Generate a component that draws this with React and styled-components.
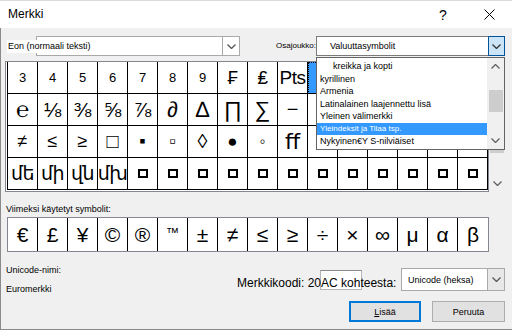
import React from 'react'
import styled, { createGlobalStyle } from 'styled-components'

const GlobalStyle = createGlobalStyle`
  html, body {
    margin: 0;
    padding: 0;
  }
  body {
    width: 512px;
    height: 330px;
    overflow: hidden;
    background: #f0f0f0;
    font-family: "Liberation Sans", Arial, sans-serif;
    color: #000;
  }
`

const SQ = 'sq'

// cells in columns 11-16 of the first three rows lie under the open subset list
const gridRows = [
  [['3', 13], ['4', 13], ['5', 13], ['6', 13], ['7', 13], ['8', 13], ['9', 13], ['₣', 19], ['₤', 19], ['Pts', 19], ['', 19, true], ['', 19], ['', 19], ['', 19], ['', 19], ['', 19]],
  [['℮', 22], ['⅛', 21], ['⅜', 21], ['⅝', 21], ['⅞', 21], ['∂', 22], ['∆', 22], ['∏', 22], ['∑', 22], ['−', 20], ['', 20], ['', 20], ['', 20], ['', 20], ['', 20], ['', 20]],
  [['≠', 18], ['≤', 18], ['≥', 18], ['□', 20], ['▪', 18], ['▫', 18], ['◊', 20], ['●', 17], ['◦', 17], ['ﬀ', 22], ['', 22], ['', 22], ['', 22], ['', 22], ['', 22], ['', 22]],
  [['մե', 19], ['մի', 19], ['վն', 19], ['մխ', 19], ...Array.from({ length: 12 }, () => [SQ, 0])],
]

const recent = [
  ['€'], ['£'], ['¥'], ['©'], ['®'], ['™', 13, true], ['±'], ['≠'],
  ['≤'], ['≥'], ['÷'], ['×'], ['∞'], ['μ'], ['α'], ['β'],
]

const subsets = [
  { label: 'kreikka ja kopti', indent: true },
  { label: 'kyrillinen' },
  { label: 'Armenia' },
  { label: 'Latinalainen laajennettu lisä' },
  { label: 'Yleinen välimerkki' },
  { label: 'Yleindeksit ja Tilaa tsp.', active: true },
  { label: 'Nykyinen€Y S-nilviäiset' },
]

const Chevron = ({ up, color = '#444', w = 9 }) => (
  <svg width={w} height="5" viewBox="0 0 9 5">
    <polyline
      points={up ? '0.5,4.5 4.5,0.5 8.5,4.5' : '0.5,0.5 4.5,4.5 8.5,0.5'}
      fill="none"
      stroke={color}
      strokeWidth="1.3"
    />
  </svg>
)

const App = () => {
  return (
    <>
      <GlobalStyle />
      <Window>
        <TitleBar>
          <Title>Merkki</Title>
          <CaptionButton>?</CaptionButton>
          <CaptionButton>
            <svg width="11" height="11" viewBox="0 0 11 11">
              <path d="M0.5 0.5 L10.5 10.5 M10.5 0.5 L0.5 10.5" stroke="#000" strokeWidth="1" />
            </svg>
          </CaptionButton>
        </TitleBar>

        <Body>
          <TopRow>
            <FontPicker>
              <FontLabel>Eon (normaali teksti)</FontLabel>
              <ComboText />
              <ComboButton>
                <Chevron color="#555" />
              </ComboButton>
            </FontPicker>
            <SmallLabel>Osajoukko:</SmallLabel>
            <SubsetPicker>
              <ComboText $pad={13}>Valuuttasymbolit</ComboText>
              <ComboButton $open>
                <Chevron color="#333" />
              </ComboButton>
              <DropList>
                <ListItems>
                  {subsets.map(s => (
                    <ListItem key={s.label} $indent={s.indent} $active={s.active}>
                      {s.label}
                    </ListItem>
                  ))}
                </ListItems>
                <ScrollBar>
                  <ArrowBox><Chevron up color="#606060" /></ArrowBox>
                  <Thumb $top={15} $height={22} />
                  <Spacer />
                  <ArrowBox><Chevron color="#606060" /></ArrowBox>
                </ScrollBar>
              </DropList>
            </SubsetPicker>
          </TopRow>

          <GridPanel>
            <GridBox>
              <SymbolGrid>
                {gridRows.flat().map(([c, size, selected], i) => (
                  <Cell key={i} $size={size} $selected={selected}>
                    {c === SQ ? <Missing /> : c}
                  </Cell>
                ))}
              </SymbolGrid>
            </GridBox>
            <ScrollBar $grid>
              <ArrowBox><Chevron up color="#606060" /></ArrowBox>
              <Thumb $top={0} $height={75} />
              <Spacer />
              <ArrowBox><Chevron color="#606060" /></ArrowBox>
            </ScrollBar>
          </GridPanel>

          <SectionLabel>Viimeksi käytetyt symbolit:</SectionLabel>
          <RecentBox>
            {recent.map(([c, size, raised]) => (
              <RecentCell key={c} $size={size} $raised={raised}>{c}</RecentCell>
            ))}
          </RecentBox>

          <BottomArea>
            <InfoColumn>
              <SectionLabel $flat>Unicode-nimi:</SectionLabel>
              <SectionLabel $flat $gap={8}>Euromerkki</SectionLabel>
            </InfoColumn>
            <CodeColumn>
              <CodeRow>
                <CodeInput />
                <CodeText>Merkkikoodi: 20AC kohteesta:</CodeText>
                <UnicodePicker>
                  <ComboText $pad={6}>Unicode (heksa)</ComboText>
                  <ComboButton $flat>
                    <Chevron color="#555" />
                  </ComboButton>
                </UnicodePicker>
              </CodeRow>
              <ButtonRow>
                <DialogButton $primary><u>L</u>isää</DialogButton>
                <DialogButton>Peruuta</DialogButton>
              </ButtonRow>
            </CodeColumn>
          </BottomArea>
        </Body>
        <Grip>
          <svg width="7" height="7" viewBox="0 0 7 7">
            <rect x="5" y="1" width="1" height="1" fill="#999" />
            <rect x="3" y="3" width="1" height="1" fill="#999" />
            <rect x="5" y="3" width="1" height="1" fill="#999" />
            <rect x="1" y="5" width="1" height="1" fill="#999" />
            <rect x="3" y="5" width="1" height="1" fill="#999" />
            <rect x="5" y="5" width="1" height="1" fill="#999" />
          </svg>
        </Grip>
      </Window>
    </>
  )
}

const Window = styled.div`
position: relative;
width: 512px;
height: 330px;
display: flex;
flex-direction: column;
background: #f0f0f0;
`

const TitleBar = styled.header`
flex: none;
height: 28px;
box-sizing: border-box;
border-top: 1px solid #dcdcdc;
background: #fff;
display: flex;
align-items: center;
padding-left: 8px;
`

const Title = styled.div`
flex: 1;
font-size: 12px;
margin-top: -1px;
`

const CaptionButton = styled.div`
width: 46px;
height: 27px;
display: flex;
align-items: center;
justify-content: center;
font-size: 14px;
`

const Body = styled.main`
flex: 1;
box-sizing: border-box;
border-left: 1px solid #8a8a8a;
border-bottom: 1px solid #8a8a8a;
padding: 0 6px 0 4px;
display: flex;
flex-direction: column;
`

const TopRow = styled.div`
margin-top: 8px;
height: 20px;
display: flex;
align-items: center;
`

const Combo = styled.div`
position: relative;
height: 100%;
box-sizing: border-box;
border: 1px solid #7a7a7a;
background: #fff;
display: flex;
`

const FontPicker = styled(Combo)`
margin-left: 31px;
width: 204px;
border-color: #a9a9a9;
`

const SubsetPicker = styled(Combo)`
width: 189px;
border-color: #7a7a7a;
`

const FontLabel = styled.span`
position: absolute;
left: -30px;
top: 3px;
height: 13px;
line-height: 13px;
padding-left: 1px;
background: #fff;
font-size: 9px;
white-space: nowrap;
`

const ComboText = styled.div`
flex: 1;
padding-left: ${p => p.$pad || 4}px;
font-size: 9px;
display: flex;
align-items: center;
white-space: nowrap;
`

const ComboButton = styled.div`
width: 17px;
margin: ${p => (p.$open ? '-1px -1px -1px 0' : '0')};
box-sizing: border-box;
display: flex;
align-items: center;
justify-content: center;
background: ${p => (p.$open ? '#cce4f7' : p.$flat ? '#e8e8e8' : '#fff')};
border: ${p => (p.$open ? '1px solid #005499' : 'none')};
border-left: 1px solid ${p => (p.$open ? '#005499' : '#a9a9a9')};
`

const SmallLabel = styled.span`
margin-left: 36px;
width: 40px;
font-size: 8px;
margin-top: -2px;
`

const DropList = styled.div`
position: absolute;
z-index: 3;
top: 20px;
left: -1px;
width: 189px;
height: 93px;
box-sizing: border-box;
border: 1px solid #646464;
background: #fff;
display: flex;
`

const ListItems = styled.div`
flex: 1;
padding-top: 2px;
`

const ListItem = styled.div`
height: 12.5px;
line-height: 12.5px;
padding-left: ${p => (p.$indent ? 16 : 3)}px;
font-size: ${p => (p.$active ? 8 : 9)}px;
white-space: nowrap;
background: ${p => (p.$active ? '#3399ff' : 'transparent')};
color: ${p => (p.$active ? '#fff' : '#000')};
`

const ScrollBar = styled.div`
width: ${p => (p.$grid ? 16 : 17)}px;
height: ${p => (p.$grid ? '131px' : 'auto')};
background: #f0f0f0;
display: flex;
flex-direction: column;
align-items: center;
`

const ArrowBox = styled.div`
height: 17px;
width: 100%;
display: flex;
align-items: center;
justify-content: center;
`

const Thumb = styled.div`
margin-top: ${p => p.$top}px;
width: 14px;
height: ${p => p.$height}px;
background: #cdcdcd;
`

const Spacer = styled.div`
flex: 1;
`

const GridPanel = styled.div`
margin-top: 5px;
display: flex;
`

const GridBox = styled.div`
width: 484px;
box-sizing: border-box;
border: 1px solid #828790;
padding: 0 0 1px 1px;
background: #fff;
`

const SymbolGrid = styled.div`
display: grid;
grid-template-columns: repeat(16, 30px);
grid-auto-rows: 32px;
border-left: 1px solid #000;
`

const Cell = styled.div`
box-sizing: border-box;
border-right: 1px solid #000;
border-bottom: 1px solid #000;
display: flex;
align-items: center;
justify-content: center;
overflow: hidden;
white-space: nowrap;
font-family: "Liberation Sans", "DejaVu Sans", sans-serif;
font-size: ${p => p.$size || 18}px;
letter-spacing: ${p => (p.$size === 19 ? '-0.5px' : '0')};
background: ${p => (p.$selected ? '#3399ff' : '#fff')};
outline: ${p => (p.$selected ? '1px dotted #000' : 'none')};
outline-offset: -1px;
`

const Missing = styled.span`
width: 6px;
height: 5px;
border: 2px solid #000;
background: #fff;
`

const SectionLabel = styled.div`
margin-top: ${p => (p.$flat ? p.$gap || 0 : 12)}px;
padding-left: 1px;
font-size: 9px;
line-height: 11px;
white-space: nowrap;
`

const RecentBox = styled.div`
margin: 2px 0 0 2px;
width: 482px;
height: 35px;
box-sizing: border-box;
border: 1px solid #828790;
background: #fff;
display: grid;
grid-template-columns: repeat(16, 30px);
`

const RecentCell = styled.div`
box-sizing: border-box;
border-right: 1px solid #000;
display: flex;
align-items: ${p => (p.$raised ? 'flex-start' : 'center')};
padding-top: ${p => (p.$raised ? 7 : 0)}px;
justify-content: center;
font-family: "Liberation Sans", "DejaVu Sans", sans-serif;
font-size: ${p => p.$size || 21}px;

&:last-child {
  border-right: none;
}
`

const BottomArea = styled.div`
display: flex;
align-items: flex-start;
`

const InfoColumn = styled.div`
margin-top: 13px;
display: flex;
flex-direction: column;
`

const CodeColumn = styled.div`
margin: 16px 1px 0 auto;
width: 268px;
display: flex;
flex-direction: column;
`

const CodeRow = styled.div`
position: relative;
height: 23px;
display: flex;
align-items: flex-end;
`

const CodeInput = styled.div`
position: absolute;
left: 83px;
top: 2px;
width: 42px;
height: 20px;
box-sizing: border-box;
border: 1px solid #b5b5b5;
border-top-color: #8a8a8a;
background: #fff;
`

const CodeText = styled.span`
position: relative;
z-index: 1;
font-size: 12px;
line-height: 14px;
padding-bottom: 1px;
white-space: nowrap;
`

const UnicodePicker = styled(Combo)`
margin-left: auto;
width: 104px;
border-color: #a9a9a9;
`

const ButtonRow = styled.div`
margin-top: 10px;
display: flex;
justify-content: flex-end;
gap: 11px;
`

const DialogButton = styled.div`
width: ${p => (p.$primary ? 72 : 73)}px;
height: 21px;
box-sizing: border-box;
background: #e1e1e1;
border: ${p => (p.$primary ? '2px solid #0078d7' : '1px solid #adadad')};
display: flex;
align-items: center;
justify-content: center;
font-size: 9px;

u {
  text-decoration-thickness: 1px;
}
`

const Grip = styled.div`
position: absolute;
right: 0;
bottom: 1px;
width: 7px;
height: 7px;
`

export default App
